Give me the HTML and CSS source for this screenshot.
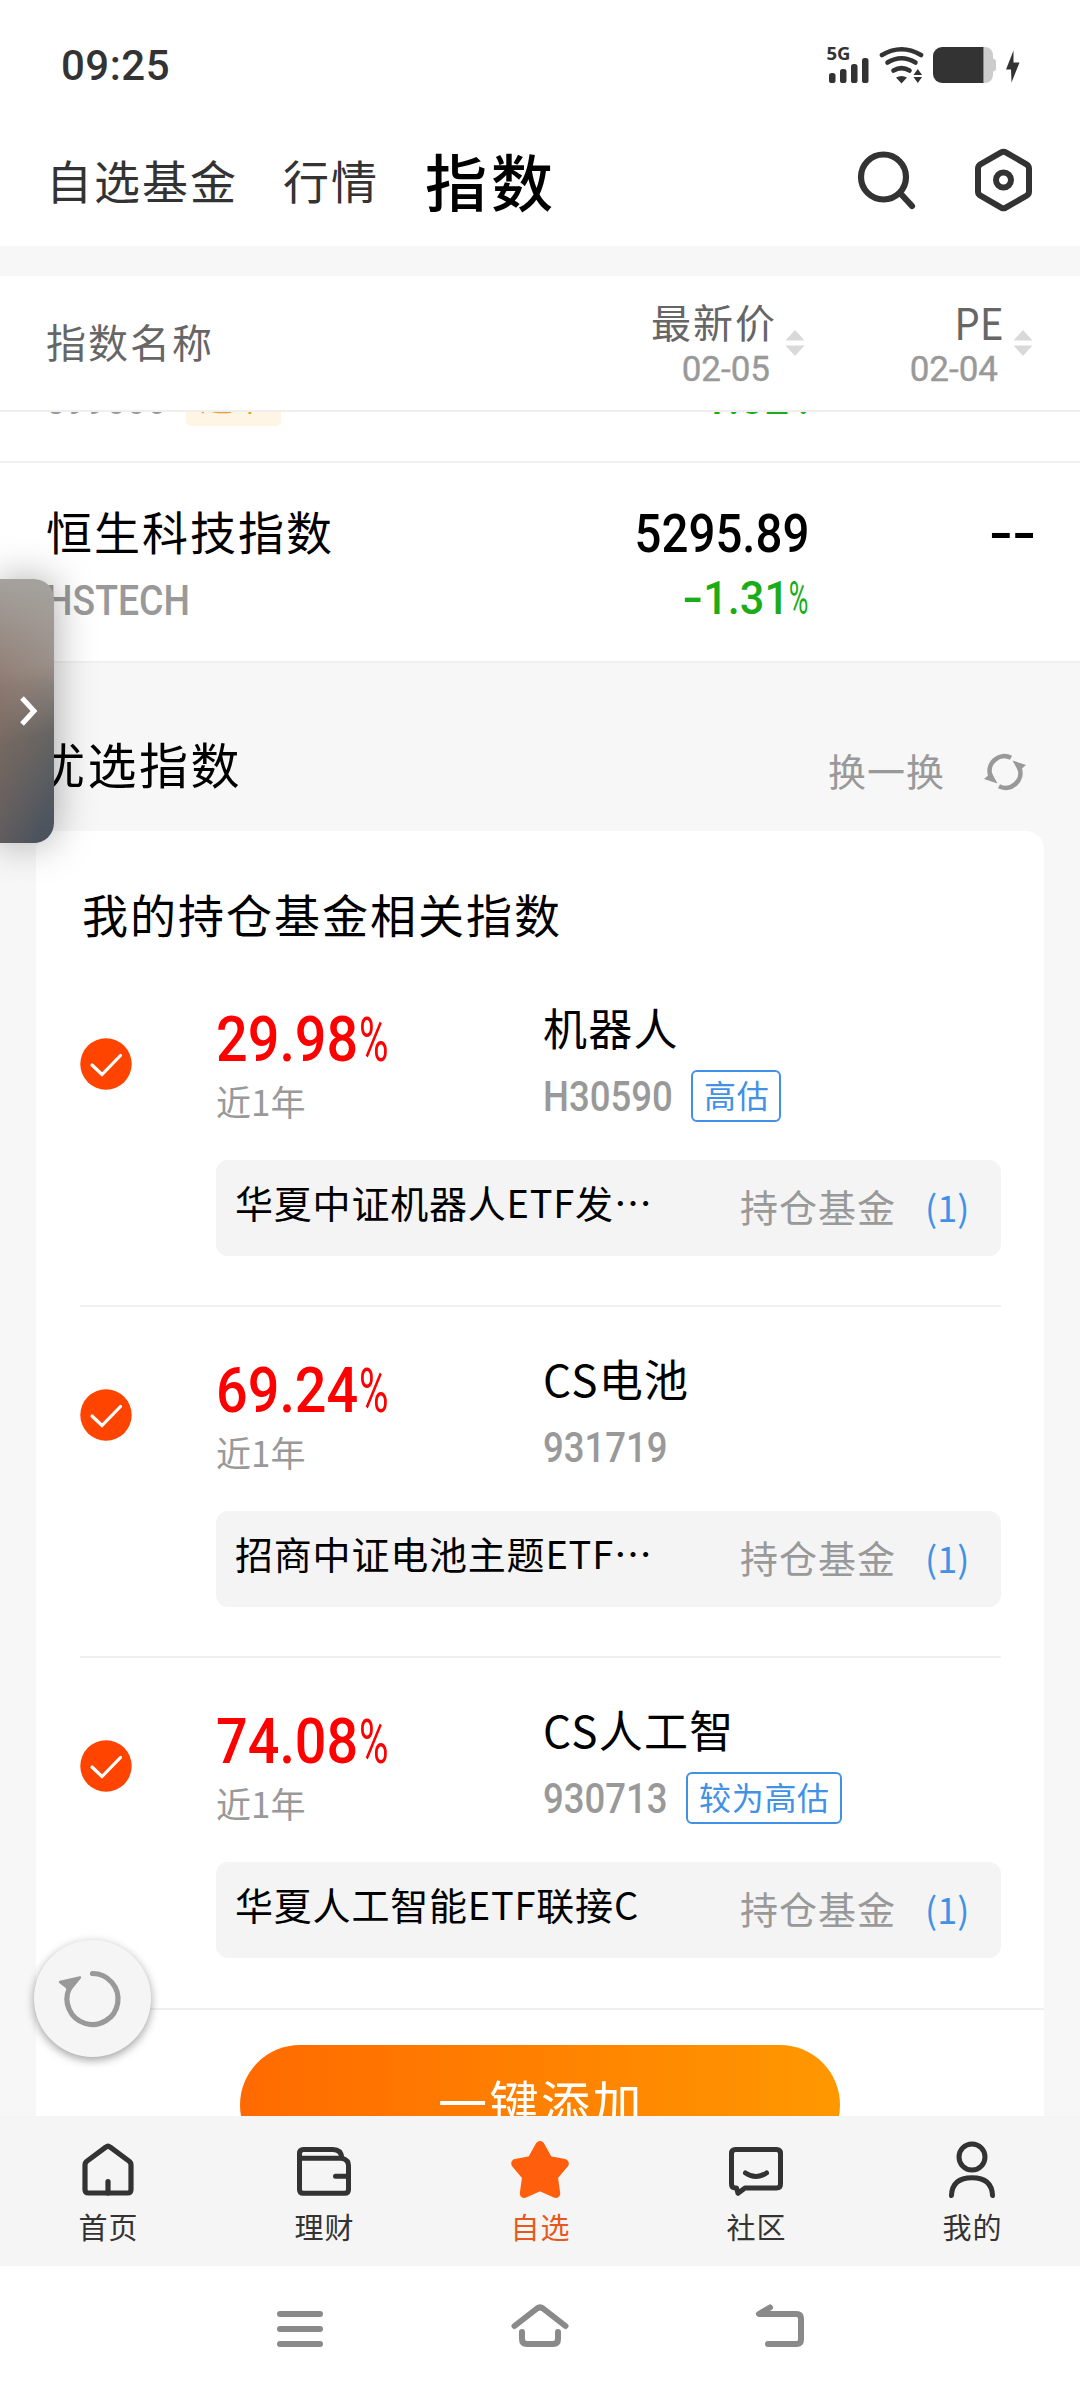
FILE: index.html
```html
<!DOCTYPE html>
<html lang="zh-CN">
<head>
<meta charset="utf-8">
<title>指数</title>
<link rel="stylesheet" href="styles.css">
</head>
<body>
<div class="screen">
  <div class="status">
    <span class="clock">09:25</span>
    <div class="status-icons">
      <svg class="i-signal" viewBox="826 41 44 42" width="44" height="42">
        <text x="826.5" y="60" class="net" textLength="24" lengthAdjust="spacingAndGlyphs">5G</text>
        <g fill="#333"><rect x="829" y="73" width="6.5" height="10" rx="2.6"/><rect x="840" y="69" width="6.5" height="14" rx="2.6"/><rect x="851" y="64" width="6.5" height="19" rx="2.6"/><rect x="862" y="58" width="6.5" height="25" rx="2.6"/></g>
      </svg>
      <svg class="i-wifi" viewBox="878 46 47 38" width="47" height="38">
        <g fill="none" stroke="#333" stroke-width="4.6" stroke-linecap="round"><path d="M882 55q19.500-11.500 39 0"/><path d="M887.500 62.500q14-8.500 28 0"/><path d="M893.500 70.500q8-4.800 16 0"/></g>
        <path d="M896 77.500q5.500-3.200 11 0l-5.500 6z" fill="#333"/>
        <path d="M913.500 75l4.300-6 4.300 6zM913.500 77l4.300 6 4.300-6z" fill="#333"/>
      </svg>
      <svg class="i-battery" viewBox="932 46 65 38" width="65" height="38">
        <path d="M983.500 47h1.500a8 8 0 0 1 8 8v3.500q3 .5 3 3v7q0 2.500-3 3V75a8 8 0 0 1-8 8h-1.500z" fill="#ccc"/>
        <path d="M983.500 47H942a9 9 0 0 0-9 9v18a9 9 0 0 0 9 9h41.500z" fill="#333"/>
      </svg>
      <svg class="i-bolt" viewBox="1005 50 15 33" width="15" height="33"><path d="M1013.500 50.500l-7.500 19h5l.5 13 8-20h-6z" fill="#333"/></svg>
    </div>
  </div>

  <div class="tabs">
    <span class="tab">自选基金</span>
    <span class="tab">行情</span>
    <span class="tab active">指数</span>
    <div class="tab-actions">
      <svg viewBox="855 148 64 64" width="64" height="64"><g fill="none" stroke="#333" stroke-width="6.200" stroke-linecap="round"><circle cx="883.500" cy="177" r="22.500"/><path d="M900.500 193.500l11.500 12.500"/></g></svg>
      <svg viewBox="971 146 64 68" width="64" height="68"><g fill="none" stroke="#333" stroke-width="6" stroke-linejoin="round"><path d="M1001.200 152.400Q1003.500 151 1005.800 152.400L1026.500 164.300Q1029 165.800 1029 168.500V191.500Q1029 194.200 1026.500 195.700L1005.800 207.600Q1003.500 209 1001.200 207.600L980.500 195.700Q978 194.200 978 191.500V168.500Q978 165.800 980.500 164.300Z"/><circle cx="1003.500" cy="180" r="7.500"/></g></svg>
    </div>
  </div>
  <div class="band"></div>

  <div class="thead">
    <span class="th-name">指数名称</span>
    <div class="th-col">
      <div class="th-text"><span class="th-label">最新价</span><span class="th-date">02-05</span></div>
      <svg class="sorter" viewBox="0 0 20 26" width="20" height="26"><path d="M10 0l9.500 10.500H.5zM10 26L.5 15.500h19z"/></svg>
    </div>
    <div class="th-col">
      <div class="th-text"><span class="th-label latin">PE</span><span class="th-date">02-04</span></div>
      <svg class="sorter" viewBox="0 0 20 26" width="20" height="26"><path d="M10 0l9.500 10.500H.5zM10 26L.5 15.500h19z"/></svg>
    </div>
  </div>

  <div class="content">
    <div class="list">
      <div class="row partial">
        <div class="cell-name"><div class="sub"><span class="code">399006</span><span class="mark">适中</span></div></div>
        <div class="cell-price"><span class="change"><u>-</u>1.02<i>%</i></span></div>
      </div>
      <div class="row">
        <div class="cell-name"><span class="name">恒生科技指数</span><div class="sub"><span class="code hs">HSTECH</span></div></div>
        <div class="cell-price"><span class="price">5295.89</span><span class="change"><u>-</u>1.31<i>%</i></span></div>
        <div class="cell-pe"><span>--</span></div>
      </div>
    </div>

    <div class="section-head">
      <span class="section-title">优选指数</span>
      <div class="shuffle">
        <span>换一换</span>
        <svg viewBox="983 752 44 40" width="44" height="40"><g fill="none" stroke="#999" stroke-width="4.600"><path d="M1011 757.700A14.800 14.800 0 0 0 990.500 776"/><path d="M999 786.300A14.800 14.800 0 0 0 1019.500 768"/></g><path d="M984 779l7.500-6.500 6 11zM1026 765l-7.500 6.500-6-11z" fill="#999"/></svg>
      </div>
    </div>

    <div class="card">
      <div class="card-title">我的持仓基金相关指数</div>
      <div class="item">
        <svg class="check" viewBox="0 0 52 52" width="52" height="52"><circle cx="26" cy="26" r="25.700"/><path d="M12 27l10 9.500 18.500-19"/></svg>
        <div class="item-main">
          <div class="stats">
            <div class="rate"><span class="rate-num"><b>29.98</b><i>%</i></span><span class="period">近1年</span></div>
            <div class="index"><span class="index-name">机器人</span><div class="index-sub"><span class="index-code wide">H30590</span><span class="tag">高估</span></div></div>
          </div>
          <div class="fund"><span class="fund-name">华夏中证机器人ETF发…</span><span class="hold">持仓基金</span><span class="count">(1)</span></div>
        </div>
      </div>
      <div class="item">
        <svg class="check" viewBox="0 0 52 52" width="52" height="52"><circle cx="26" cy="26" r="25.700"/><path d="M12 27l10 9.500 18.500-19"/></svg>
        <div class="item-main">
          <div class="stats">
            <div class="rate"><span class="rate-num"><b>69.24</b><i>%</i></span><span class="period">近1年</span></div>
            <div class="index"><span class="index-name">CS电池</span><div class="index-sub"><span class="index-code">931719</span></div></div>
          </div>
          <div class="fund"><span class="fund-name">招商中证电池主题ETF…</span><span class="hold">持仓基金</span><span class="count">(1)</span></div>
        </div>
      </div>
      <div class="item">
        <svg class="check" viewBox="0 0 52 52" width="52" height="52"><circle cx="26" cy="26" r="25.700"/><path d="M12 27l10 9.500 18.500-19"/></svg>
        <div class="item-main">
          <div class="stats">
            <div class="rate"><span class="rate-num"><b>74.08</b><i>%</i></span><span class="period">近1年</span></div>
            <div class="index"><span class="index-name">CS人工智</span><div class="index-sub"><span class="index-code">930713</span><span class="tag">较为高估</span></div></div>
          </div>
          <div class="fund"><span class="fund-name">华夏人工智能ETF联接C</span><span class="hold">持仓基金</span><span class="count">(1)</span></div>
        </div>
      </div>
      <div class="card-foot"><div class="add-all">一键添加</div></div>
    </div>
  </div>

  <div class="tabbar">
    <div class="tb">
      <svg viewBox="78 2137 60 64" width="60" height="64"><g fill="none" stroke="#333" stroke-width="5.200" stroke-linecap="round" stroke-linejoin="round"><path d="M105.800 2147.200Q108 2145.400 110.200 2147.200L129.500 2161.500Q131 2162.800 131 2165V2189.500Q131 2193 127.500 2193H88.500Q85 2193 85 2189.500V2165Q85 2162.800 86.500 2161.500Z"/><path d="M108 2181.500V2193"/></g></svg>
      <span>首页</span>
    </div>
    <div class="tb">
      <svg viewBox="294 2137 60 64" width="60" height="64"><g fill="none" stroke="#333" stroke-width="5" stroke-linecap="round" stroke-linejoin="round"><path d="M299.500 2158V2153.500Q299.500 2149.500 303.500 2149.500H333Q341 2149.500 342 2158"/><path d="M299.500 2158.300H342.500Q348.500 2160 348.500 2165.500V2189.500Q348.500 2193.300 344.500 2193.300H303.500Q299.500 2193.300 299.500 2189.500Z"/><path d="M335.500 2176.300H348"/></g></svg>
      <span>理财</span>
    </div>
    <div class="tb on">
      <svg viewBox="510 2137 60 64" width="60" height="64"><path d="M540 2145.500L548.300 2160.300 564.300 2163.500 553.300 2176.500 555.700 2193.500 540 2186.300 524.300 2193.500 526.700 2176.500 515.700 2163.500 531.700 2160.300Z" fill="#ff5f0c" stroke="#ff5f0c" stroke-width="9" stroke-linejoin="round"/></svg>
      <span>自选</span>
    </div>
    <div class="tb">
      <svg viewBox="726 2137 60 64" width="60" height="64"><g fill="none" stroke="#333" stroke-width="5" stroke-linecap="round" stroke-linejoin="round"><path d="M735.500 2149.500H776.500Q780.500 2149.500 780.500 2153.500V2184Q780.500 2188 776.500 2188H745L738 2193.300 736.500 2188H735.500Q731.500 2188 731.500 2184V2153.500Q731.500 2149.500 735.500 2149.500Z"/><path d="M745.500 2173Q756 2180 766.500 2173"/></g></svg>
      <span>社区</span>
    </div>
    <div class="tb">
      <svg viewBox="942 2137 60 64" width="60" height="64"><g fill="none" stroke="#333" stroke-width="5" stroke-linecap="round"><circle cx="972" cy="2157" r="13"/><path d="M951.500 2195.500C952 2183 960 2177.800 972 2177.800S992 2183 992.500 2195.500"/></g></svg>
      <span>我的</span>
    </div>
  </div>

  <div class="sysnav">
    <svg viewBox="272 2300 56 52" width="56" height="52"><path d="M280 2314H320M280 2329H320M280 2344H320"/></svg>
    <svg viewBox="510 2300 60 52" width="60" height="52"><path d="M514.500 2326L537 2308.500Q540 2306.300 543 2308.500L565.500 2326M522 2332V2339Q522 2344 527 2344H553Q558 2344 558 2339V2332"/></svg>
    <svg viewBox="752 2300 56 52" width="56" height="52"><path d="M770 2307.500L759 2314H796.500Q801 2314 801 2318.500V2339.500Q801 2344 796.500 2344H768"/></svg>
  </div>

  <div class="drawer"><svg viewBox="0 0 20 32" width="20" height="32"><path d="M4 3l12 13L4 29"/></svg></div>
  <div class="reload"><svg viewBox="56 1966 70 64" width="70" height="64"><path d="M92.500 1972.500A25.500 25.500 0 1 1 69.500 1987" fill="none" stroke="#999" stroke-width="5.200" stroke-linecap="round"/><path d="M60 1981L80 1976.500 69 1990 66.500 1986Z" fill="#999" stroke="#999" stroke-width="2.500" stroke-linejoin="round"/></svg></div>
</div>
</body>
</html>
```
FILE: styles.css
```css
* { box-sizing: border-box; }
html, body { margin: 0; }
body { background: #fff; color: #000; font-family: "Noto Sans CJK SC", sans-serif; }
i { font-style: normal; }
u { text-decoration: none; }
svg { display: block; flex: none; }
.screen { position: relative; width: 1080px; height: 2392px; display: flex; flex-direction: column; overflow: hidden; background: #fff; white-space: nowrap; }

/* status bar */
.status { height: 130px; flex: none; display: flex; align-items: center; justify-content: space-between; padding: 0 60px 0 61px; color: #333; }
.clock { font: 500 42px/60px Roboto, sans-serif; letter-spacing: 0.5px; padding-top: 1px; }
.status-icons { display: flex; align-items: center; }
.net { font: 700 17px "Open Sans", sans-serif; fill: #333; }
.i-signal { margin-top: -6px; }
.i-wifi { margin-left: 8px; }
.i-battery { margin-left: 7px; }
.i-bolt { margin-left: 8px; margin-top: 3px; }

/* top tabs */
.tabs { height: 116px; flex: none; display: flex; align-items: center; padding: 0 45px 16px 46px; color: #333; }
.tab { font-size: 46px; letter-spacing: 2px; line-height: 70px; margin: -3px 45px 0 0; }
.tab.active { font-size: 62px; font-weight: 500; letter-spacing: 4px; color: #000; margin: -1px 0 0 1px; }
.tab-actions { margin-left: auto; display: flex; align-items: center; gap: 52px; }
.band { height: 30px; flex: none; background: #f7f7f7; }

/* table header */
.thead { height: 136px; flex: none; display: grid; grid-template-columns: 301px 458px 1fr; align-items: center; padding: 0 47px 0 46px; border-bottom: 2px solid #efefef; color: #666; }
.th-name { font-size: 40px; letter-spacing: 2px; line-height: 50px; padding-bottom: 4px; }
.th-col { display: flex; justify-content: flex-end; align-items: center; gap: 11px; }
.th-text { display: flex; flex-direction: column; align-items: flex-end; padding-top: 2px; }
.th-label { font-size: 40px; letter-spacing: 2px; line-height: 50px; margin-right: -3px; }
.th-label.latin { font-size: 43px; letter-spacing: 0; margin-right: -2px; transform: scaleX(.94); transform-origin: right; }
.th-date { font: 400 35px/48px Roboto, sans-serif; color: #999; margin: 0 4px -2px 0; -webkit-text-stroke: 0.4px #999; }
.sorter { fill: #d9d9d9; }

/* scrolling content */
.content { height: 1704px; flex: none; overflow: hidden; background: #f7f7f7; }
.list { height: 251px; overflow: hidden; background: #fff; }
.row { height: 200px; display: grid; grid-template-columns: 401px 362px 1fr; padding: 0 44px 0 46px; border-bottom: 2px solid #f0f0f0; }
.row.partial { height: 51px; overflow: hidden; }
.cell-name { display: flex; flex-direction: column; gap: 11px; padding-top: 37px; }
.partial .cell-name { padding-top: 0; margin-top: -42px; }
.name { font-size: 46px; letter-spacing: 2px; line-height: 60px; }
.sub { height: 60px; display: flex; align-items: center; }
.code { width: 128px; font: 500 42px/60px Roboto, sans-serif; color: #999; transform: scaleX(.84); transform-origin: left; }
.code.hs { transform: scaleX(.89); }
.mark { margin-left: 12px; height: 52px; padding: 0 14px; border-radius: 5px; background: #fff5e5; color: #dfa030; font-size: 33px; letter-spacing: 0.5px; line-height: 46px; }
.cell-price { display: flex; flex-direction: column; align-items: flex-end; gap: 4px; padding-top: 41px; }
.partial .cell-price { padding-top: 0; margin-top: -44px; }
.price { font: 500 53px/60px Roboto, sans-serif; transform: scaleX(.895); transform-origin: right; }
.change { display: flex; font: 500 47px/60px Roboto, sans-serif; color: #1aad19; transform: scaleX(.92); transform-origin: right; }
.change u { width: 16px; transform: scaleX(1.4); transform-origin: right; }
.change i { font-weight: 400; width: 22px; transform: scaleX(.62); transform-origin: left; }
.cell-pe { display: flex; justify-content: flex-end; padding-top: 41px; font: 500 53px/60px Roboto, sans-serif; }
.cell-pe span { transform: scaleX(1.3); transform-origin: right; }

.section-head { height: 168px; display: flex; align-items: center; justify-content: space-between; padding: 32px 53px 0 36px; }
.section-title { font-size: 49px; letter-spacing: 2.500px; line-height: 70px; }
.shuffle { display: flex; align-items: center; gap: 38px; padding-top: 14px; font-size: 38px; letter-spacing: 1px; line-height: 50px; color: #999; }
.shuffle svg { margin-top: 3px; }

/* card */
.card { margin: 0 36px; height: 1400px; background: #fff; border-radius: 18px; padding-top: 52px; }
.card-title { font-size: 46px; letter-spacing: 2px; line-height: 60px; margin: 0 44px 13px 46px; }
.item { height: 351px; margin: 0 43px 0 44px; display: flex; border-bottom: 2px solid #f0f0f0; }
.item:nth-child(4) { border-bottom: 0; height: 350px; }
.check { margin-top: 82px; margin-right: 84px; }
.check circle { fill: #ff4400; }
.check path { fill: none; stroke: #fff; stroke-width: 3.200; stroke-linecap: round; }
.item-main { flex: 1; }
.stats { height: 204px; display: flex; }
.rate { width: 327px; padding: 54px 0 0 0; display: flex; flex-direction: column; gap: 11px; }
.rate-num { display: flex; height: 60px; color: #f00; }
.rate-num b { width: 143px; font: 500 63px/60px Roboto, sans-serif; transform: scaleX(.885); transform-origin: left; }
.rate-num i { font: 400 61px/60px Roboto, sans-serif; transform: scaleX(.66); transform-origin: left; }
.period { font-size: 35px; line-height: 40px; color: #999; }
.index { padding-top: 41px; display: flex; flex-direction: column; gap: 13px; }
.index-name { font-size: 44px; letter-spacing: 1.3px; line-height: 60px; }
.index-sub { height: 52px; display: flex; align-items: center; }
.index-code { width: 143px; font: 500 42px/52px Roboto, sans-serif; padding-top: 2px; color: #999; transform: scaleX(.87); transform-origin: left; }
.index-code.wide { width: 148px; }
.tag { height: 52px; border: 2px solid #4191e6; border-radius: 6px; padding: 0 10px 0 11px; font-size: 32px; letter-spacing: 0.7px; line-height: 44px; color: #4191e6; }
.fund { height: 96px; display: flex; align-items: center; background: #f4f4f4; border-radius: 12px; padding: 0 34px 0 19px; }
.fund-name { font-size: 38px; letter-spacing: 0.8px; line-height: 50px; padding-bottom: 13px; }
.hold { margin-left: auto; font-size: 38px; letter-spacing: 1px; line-height: 50px; padding-bottom: 5px; color: #999; }
.count { width: 42px; margin-left: 29px; font-size: 36px; line-height: 50px; padding-bottom: 4px; color: #4191e6; }
.card-foot { border-top: 2px solid #f0f0f0; padding-top: 35px; display: flex; justify-content: center; }
.add-all { width: 600px; height: 120px; border-radius: 60px; background: linear-gradient(90deg, #ff6a00, #ff9800); color: #fff; font-size: 49px; letter-spacing: 2.500px; line-height: 112px; text-align: center; padding-left: 2px; }

/* bottom tabs */
.tabbar { height: 150px; flex: none; display: flex; background: #f5f5f5; }
.tb { flex: 1; display: flex; flex-direction: column; align-items: center; padding-top: 21px; font-size: 29px; line-height: 40px; color: #333; }
.tb span { margin-top: 5px; letter-spacing: 1px; margin-right: -1px; }
.tb.on { color: #e5591c; }
.sysnav { height: 126px; flex: none; display: flex; justify-content: space-between; padding: 34px 272px 0; }
.sysnav path { fill: none; stroke: #8a8a8a; stroke-width: 6; stroke-linecap: round; stroke-linejoin: round; }

/* floating controls */
.drawer { position: absolute; left: 0; top: 579px; width: 54px; height: 264px; display: flex; align-items: center; padding-left: 18px; border-radius: 0 20px 20px 0; background: linear-gradient(180deg, rgba(165,162,158,1) 0%, rgba(165,162,158,0) 40%), linear-gradient(100deg, rgba(135,108,94,.75), rgba(135,108,94,0) 85%), linear-gradient(165deg, #a5a29e 0%, #9a918b 35%, #646463 60%, #565a60 80%, #48515d 100%); box-shadow: 0 0 40px rgba(0,0,0,.35); }
.drawer path { fill: none; stroke: #fff; stroke-width: 5; }
.reload { position: absolute; left: 34px; top: 1940px; width: 117px; height: 117px; display: flex; align-items: center; padding-left: 22px; border-radius: 50%; background: #f5f5f5; box-shadow: 0 3px 10px rgba(0,0,0,.38); }
```
